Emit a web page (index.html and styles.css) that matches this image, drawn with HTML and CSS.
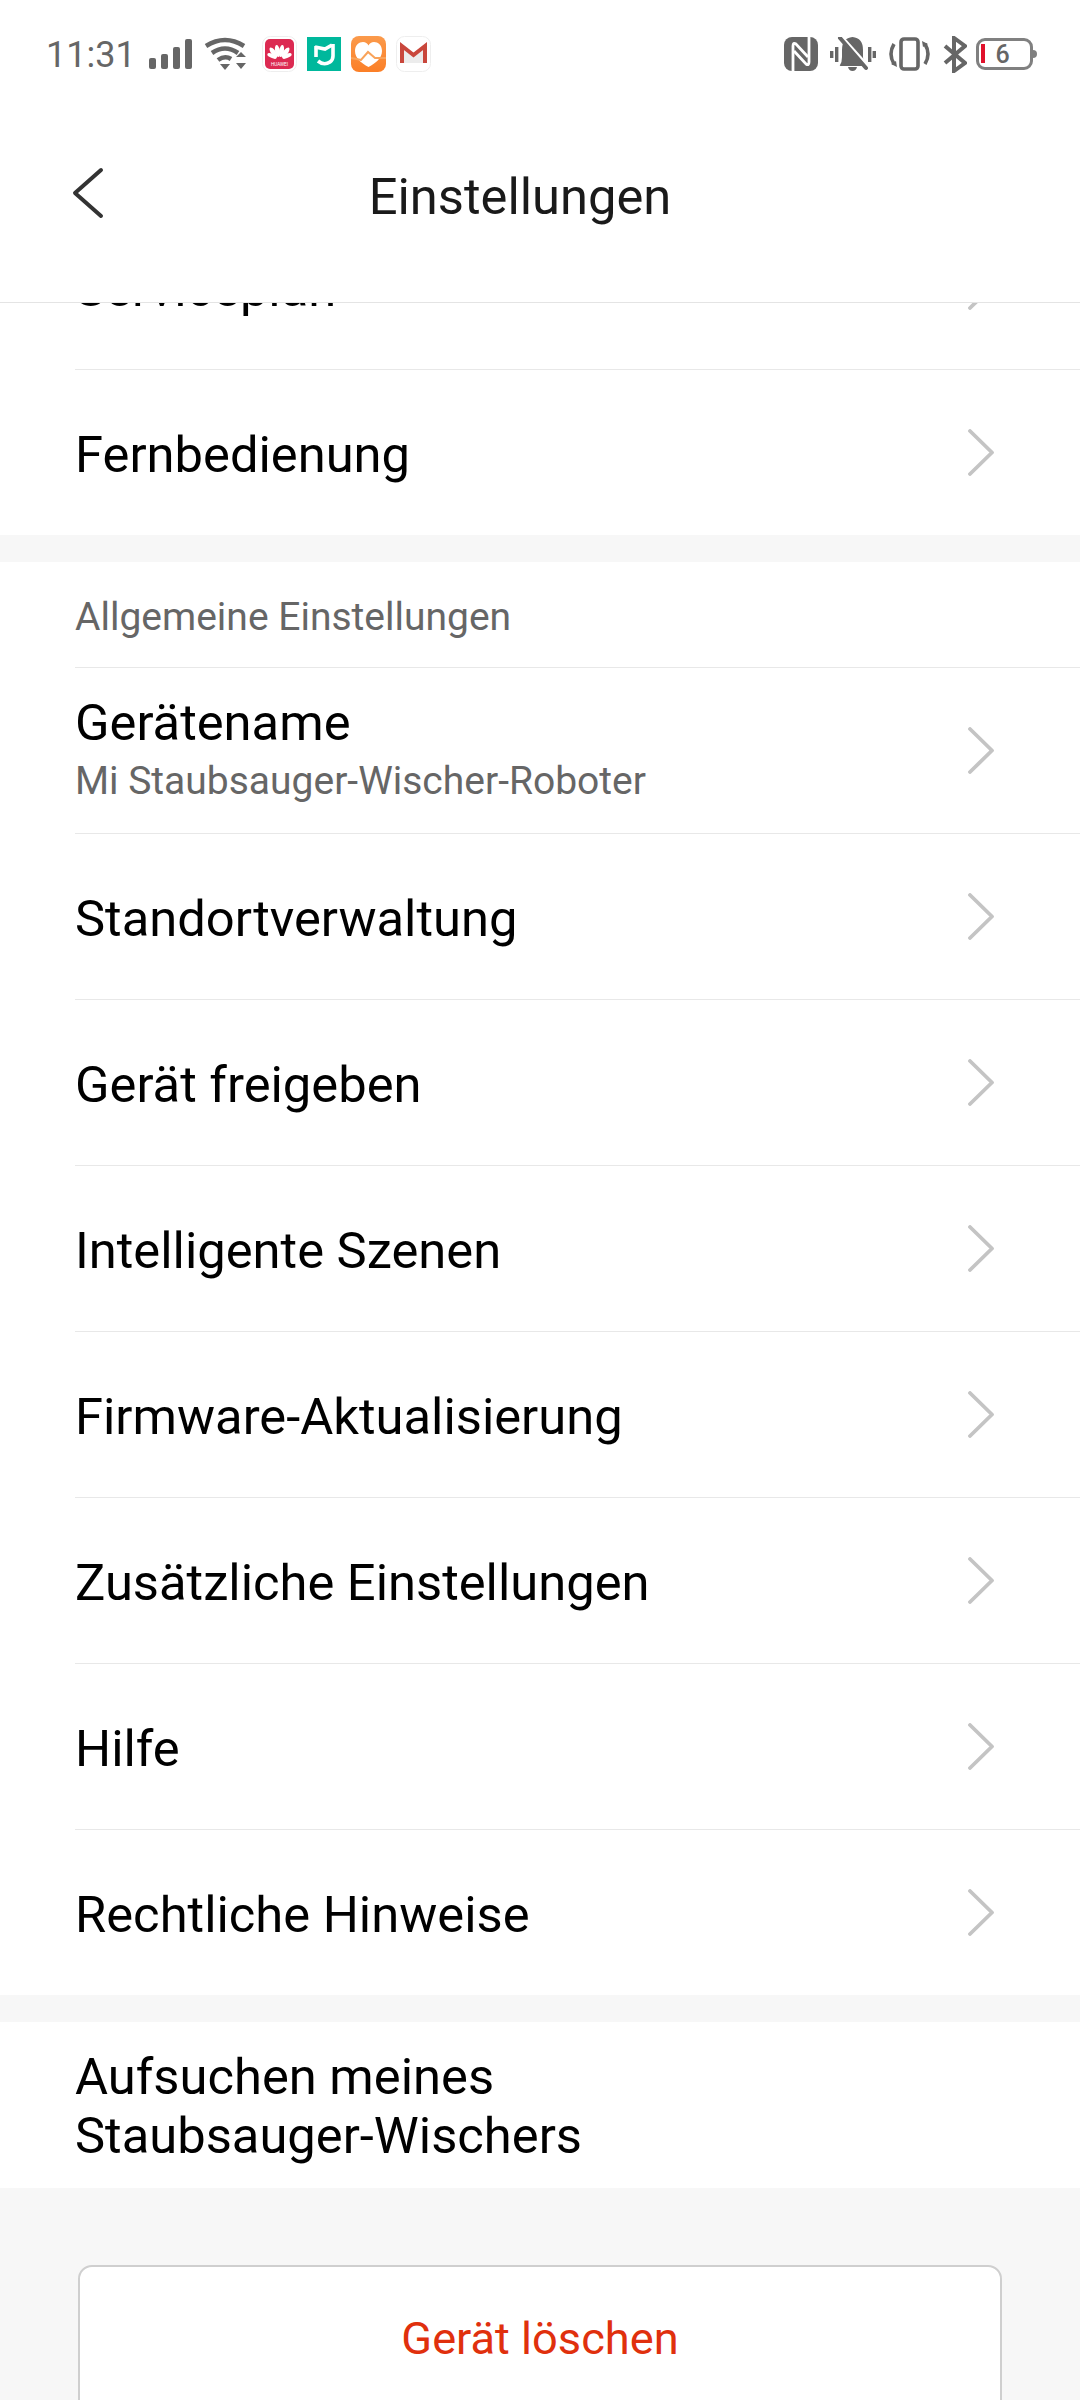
FILE: index.html
```html
<!DOCTYPE html>
<html lang="de">
<head>
    <meta charset="UTF-8">
    <meta name="viewport" content="width=device-width, initial-scale=1.0">
    <title>Einstellungen</title>
    <link rel="stylesheet" href="styles.css">
</head>
<body>
    <svg class="defs" width="0" height="0">
        <symbol id="chevron" viewBox="0 0 27 47">
            <path d="M2 2 L24 23.5 L2 45" fill="none" stroke="#c4c4c4" stroke-width="3.8" stroke-linecap="round" stroke-linejoin="round"/>
        </symbol>
    </svg>

    <div class="page">
        <header class="top">
            <div class="status">
                <div class="status-left">
                    <span class="time">11:31</span>
                    <svg class="signal" width="43" height="30" viewBox="0 0 43 30" fill="#666">
                        <rect x="0" y="19" width="7" height="11" rx="2"/>
                        <rect x="12" y="15" width="7" height="15" rx="2"/>
                        <rect x="24" y="8" width="7" height="22" rx="2"/>
                        <rect x="36" y="0" width="7" height="30" rx="2"/>
                    </svg>
                    <svg class="wifi" width="42" height="34" viewBox="0 0 42 34" fill="none" stroke="#666" stroke-width="4.6">
                        <path d="M2 9 Q21 -3 40 9"/>
                        <path d="M8 16 Q21 7 34 16"/>
                        <path d="M14 23 Q21 18 27 22"/>
                        <path d="M16 27 H26 L21 33 Z" fill="#666" stroke="none"/>
                        <path d="M32 20 L37 15 L42 20 Z M32 26 H42 L37 32 Z" fill="#666" stroke="none"/>
                    </svg>
                    <div class="notifs">
                        <svg width="35" height="36" viewBox="0 0 35 36">
                            <rect x="0.5" y="0.5" width="34" height="35" rx="8" fill="#fff" stroke="#eee"/>
                            <rect x="3" y="3" width="29" height="30" rx="5" fill="#dc2a52"/>
                            <g fill="#fff">
                                <ellipse cx="15.5" cy="15" rx="2.4" ry="6" transform="rotate(-10 15.5 15)"/>
                                <ellipse cx="19.5" cy="15" rx="2.4" ry="6" transform="rotate(10 19.5 15)"/>
                                <ellipse cx="11.5" cy="16.5" rx="2.4" ry="6" transform="rotate(-36 11.5 16.5)"/>
                                <ellipse cx="23.5" cy="16.5" rx="2.4" ry="6" transform="rotate(36 23.5 16.5)"/>
                                <ellipse cx="10" cy="20" rx="2" ry="5" transform="rotate(-66 10 20)"/>
                                <ellipse cx="25" cy="20" rx="2" ry="5" transform="rotate(66 25 20)"/>
                            </g>
                            <text x="17.5" y="30" class="huawei">HUAWEI</text>
                        </svg>
                        <svg width="34" height="34" viewBox="0 0 34 34">
                            <rect width="34" height="34" fill="#00b89c"/>
                            <g fill="none" stroke="#fff" stroke-width="3.6">
                                <path d="M9 9 V20"/>
                                <path d="M8 10 L18 12 L25 8"/>
                                <path d="M11 24 Q17 29 23 25 Q26 23 26 19 V7"/>
                            </g>
                        </svg>
                        <svg width="35" height="36" viewBox="0 0 35 36">
                            <defs>
                                <linearGradient id="health" x1="0" y1="0" x2="0" y2="1">
                                    <stop offset="0" stop-color="#fb9a4b"/>
                                    <stop offset="1" stop-color="#fb7f27"/>
                                </linearGradient>
                            </defs>
                            <rect width="35" height="36" rx="8" fill="url(#health)"/>
                            <path d="M17.5 31 C10 27 4 22 4 15 C4 9 8 6 12 6 C14.5 6 16.5 7.5 17.5 9.5 C18.5 7.5 20.5 6 23 6 C27 6 31 9 31 15 C31 22 25 27 17.5 31 Z" fill="#fff"/>
                            <path d="M0 22 Q6 23 10 24 L17 16 L24 22 L35 22" fill="none" stroke="#f9a35a" stroke-width="2"/>
                        </svg>
                        <svg width="35" height="36" viewBox="0 0 35 36">
                            <rect x="0.5" y="0.5" width="34" height="35" rx="8" fill="#fff" stroke="#eee"/>
                            <path d="M6 10 L17.5 19 L29 10 V27 H6 Z" fill="#ececec"/>
                            <path d="M6 27 V10 L17.5 19 L29 10 V27" fill="none" stroke="#c9473c" stroke-width="4"/>
                        </svg>
                    </div>
                </div>
                <div class="status-right">
                    <svg width="34" height="34" viewBox="0 0 34 34">
                        <rect width="34" height="34" rx="8" fill="#666"/>
                        <path d="M9 34 V9 Q9 5 12 7 L24 20" fill="none" stroke="#fff" stroke-width="2.8"/>
                        <path d="M25 0 V25 Q25 29 22 27 L10 14" fill="none" stroke="#fff" stroke-width="2.8"/>
                    </svg>
                    <svg width="46" height="34" viewBox="0 0 46 34" fill="#666">
                        <rect x="0" y="14" width="3.4" height="7"/>
                        <rect x="5" y="10" width="3.4" height="15"/>
                        <rect x="38" y="10" width="3.4" height="15"/>
                        <rect x="42.6" y="14" width="3.4" height="7"/>
                        <path d="M10 28 Q12 25 12 20 V13 Q12 1 22.5 0 Q33 1 33 13 V20 Q33 25 35 28 Q36 29 34 29 H11 Q9 29 10 28 Z"/>
                        <path d="M18 30 H27 Q26 34 22.5 34 Q19 34 18 30 Z"/>
                        <path d="M12 0 L38 29" stroke="#fff" stroke-width="3"/>
                        <path d="M10 1 L36 31" stroke="#666" stroke-width="4" stroke-linecap="round"/>
                    </svg>
                    <svg width="43" height="34" viewBox="0 0 43 34" fill="none" stroke="#666" stroke-width="3.6">
                        <rect x="13" y="2" width="17" height="30" rx="3"/>
                        <path d="M6 7 Q0 17 6 27"/>
                        <path d="M37 7 Q43 17 37 27"/>
                        <path d="M3 27 L9 30 L8 24 Z M40 7 L34 4 L35 10 Z" fill="#666" stroke="none"/>
                    </svg>
                    <svg width="24" height="37" viewBox="0 0 24 37" fill="none" stroke="#666" stroke-width="4">
                        <path d="M2 10 L22 27 L11 35 V2 L22 10 L2 27"/>
                    </svg>
                    <div class="battery">
                        <span class="battery-low"></span>
                        <span class="battery-num">6</span>
                    </div>
                </div>
            </div>
            <div class="navbar">
                <svg class="back" width="32" height="55" viewBox="0 0 32 55">
                    <path d="M29 5 L3 28 L29 51" fill="none" stroke="#333" stroke-width="4" stroke-linecap="round" stroke-linejoin="round"/>
                </svg>
                <h1 class="title">Einstellungen</h1>
            </div>
        </header>

        <div class="scroller">
            <div class="scroll-inner">
                <section class="group">
                    <div class="row"><span class="row-text">Serviceplan</span><svg class="chev"><use href="#chevron"/></svg></div>
                    <div class="row"><span class="row-text">Fernbedienung</span><svg class="chev"><use href="#chevron"/></svg></div>
                </section>
                <section class="group">
                    <div class="group-label">Allgemeine Einstellungen</div>
                    <div class="row">
                        <div class="row-body">
                            <span class="row-text">Gerätename</span>
                            <span class="row-sub">Mi Staubsauger-Wischer-Roboter</span>
                        </div>
                        <svg class="chev"><use href="#chevron"/></svg>
                    </div>
                    <div class="row"><span class="row-text">Standortverwaltung</span><svg class="chev"><use href="#chevron"/></svg></div>
                    <div class="row"><span class="row-text">Gerät freigeben</span><svg class="chev"><use href="#chevron"/></svg></div>
                    <div class="row"><span class="row-text">Intelligente Szenen</span><svg class="chev"><use href="#chevron"/></svg></div>
                    <div class="row"><span class="row-text">Firmware-Aktualisierung</span><svg class="chev"><use href="#chevron"/></svg></div>
                    <div class="row"><span class="row-text">Zusätzliche Einstellungen</span><svg class="chev"><use href="#chevron"/></svg></div>
                    <div class="row"><span class="row-text">Hilfe</span><svg class="chev"><use href="#chevron"/></svg></div>
                    <div class="row"><span class="row-text">Rechtliche Hinweise</span><svg class="chev"><use href="#chevron"/></svg></div>
                </section>
                <section class="group">
                    <div class="row"><span class="row-text row-text-two">Aufsuchen meines<br>Staubsauger-Wischers</span></div>
                </section>
                <div class="danger">
                    <button class="delete" type="button">Gerät löschen</button>
                </div>
            </div>
        </div>
    </div>
</body>
</html>
```

FILE: styles.css
```css
* {
    box-sizing: border-box;
}
html, body {
    margin: 0;
    padding: 0;
}
body {
    width: 1080px;
    height: 2400px;
    overflow: hidden;
    background-color: #f7f7f7;
    font-family: Roboto, "Liberation Sans", sans-serif;
}
.defs {
    display: block;
    height: 0;
}
.page {
    display: flex;
    flex-direction: column;
    height: 2400px;
}
.top {
    height: 303px;
    flex: none;
    background-color: #fff;
    border-bottom: 1px solid #e4e4e4;
}
.status {
    height: 108px;
    padding: 0 44px 0 46px;
    display: flex;
    justify-content: space-between;
    align-items: center;
}
.status-left, .status-right {
    display: flex;
    align-items: center;
}
.time {
    font-size: 36px;
    color: #666;
    width: 103px;
    padding-top: 2px;
}
.wifi {
    margin-left: 12px;
}
.notifs {
    display: flex;
    align-items: center;
    gap: 10px;
    margin-left: 16px;
}
.huawei {
    font-size: 4.6px;
    fill: #fff;
    text-anchor: middle;
}
.status-right {
    gap: 12px;
}
.battery {
    position: relative;
    width: 57px;
    height: 32px;
    margin: 0 3px 0 -3px;
    border: 3px solid #808080;
    border-radius: 9px;
    display: flex;
    align-items: center;
    justify-content: center;
}
.battery::after {
    content: "";
    position: absolute;
    right: -7px;
    top: 9px;
    width: 4px;
    height: 8px;
    background-color: #808080;
    border-radius: 0 4px 4px 0;
}
.battery-low {
    position: absolute;
    left: 2px;
    top: 3px;
    width: 4px;
    height: 19px;
    background-color: #e0112b;
}
.battery-num {
    font-size: 25px;
    font-weight: 500;
    color: #666;
    margin-right: 4px;
}
.navbar {
    position: relative;
    height: 194px;
    display: flex;
    align-items: center;
    justify-content: center;
}
.back {
    position: absolute;
    left: 72px;
    top: 57px;
}
.title {
    margin: -18px 40px 0 0;
    font-size: 50.7px;
    font-weight: 400;
    color: #1a1a1a;
}
.scroller {
    flex: 1;
    overflow: hidden;
}
.scroll-inner {
    margin-top: -100px;
}
.group {
    background-color: #fff;
    margin-bottom: 27px;
}
.group-label {
    height: 105px;
    padding: 32px 0 0 75px;
    font-size: 39px;
    color: #666;
}
.row {
    position: relative;
    height: 166px;
    padding: 0 85px 0 75px;
    display: flex;
    align-items: center;
    justify-content: space-between;
}
.row::before {
    content: "";
    position: absolute;
    left: 75px;
    right: 0;
    top: 0;
    height: 1px;
    background-color: #e8e8e8;
}
.group > .row:first-child::before {
    display: none;
}
.row-text {
    font-size: 50.7px;
    color: #000;
    line-height: 59px;
    padding-top: 5px;
}
.row-text-two {
    padding-top: 2px;
}
.row-body {
    display: flex;
    flex-direction: column;
}
.row-body .row-text {
    margin-top: -8px;
}
.row-sub {
    font-size: 39px;
    line-height: 46px;
    margin-top: 6px;
    color: #666;
}
.chev {
    width: 27px;
    height: 47px;
    flex: none;
}
.danger {
    padding: 50px 78px 0;
}
.delete {
    display: block;
    width: 100%;
    height: 200px;
    padding: 0 0 54px;
    background-color: #fff;
    border: 2px solid #cfcfcf;
    border-radius: 14px;
    font-family: inherit;
    font-size: 45.2px;
    color: #e0300d;
}
```
